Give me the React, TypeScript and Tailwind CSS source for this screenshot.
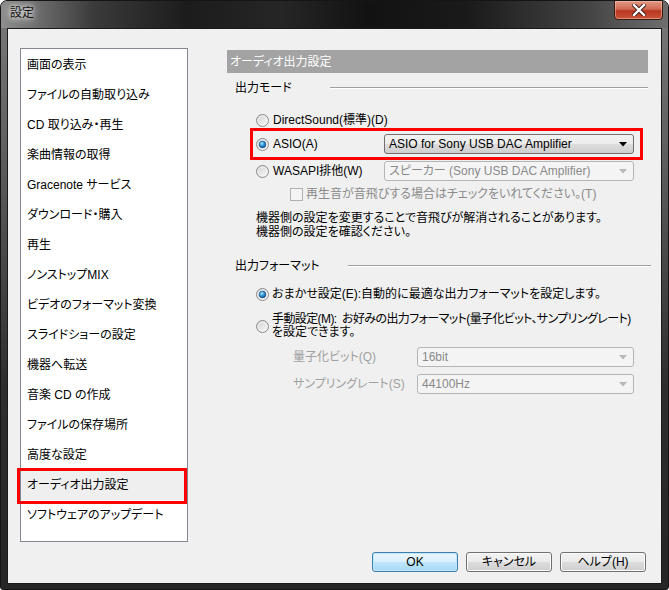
import React from "react";

const items = [
  "画面の表示",
  "ファイルの自動取り込み",
  "CD 取り込み・再生",
  "楽曲情報の取得",
  "Gracenote サービス",
  "ダウンロード・購入",
  "再生",
  "ノンストップMIX",
  "ビデオのフォーマット変換",
  "スライドショーの設定",
  "機器へ転送",
  "音楽 CD の作成",
  "ファイルの保存場所",
  "高度な設定",
  "オーディオ出力設定",
  "ソフトウェアのアップデート",
];

function Radio({ checked, id }: { checked?: boolean; id: string }) {
  return (
    <svg width="13" height="13" viewBox="0 0 13 13" className="shrink-0">
      <defs>
        <linearGradient id={`rg-${id}`} x1="0" y1="0" x2="1" y2="1">
          <stop offset="0" stopColor="#cfcfcf" />
          <stop offset="1" stopColor="#fcfcfc" />
        </linearGradient>
        <radialGradient id={`rb-${id}`} cx="0.4" cy="0.35" r="0.75">
          <stop offset="0" stopColor="#b8ecff" />
          <stop offset="0.45" stopColor="#2f93dd" />
          <stop offset="1" stopColor="#0b3f78" />
        </radialGradient>
      </defs>
      <circle cx="6.5" cy="6.5" r="6" fill={`url(#rg-${id})`} stroke="#8a8a8a" strokeWidth="1" />
      <circle cx="6.5" cy="6.5" r="4.5" fill="none" stroke="#f4f4f4" strokeWidth="0.8" />
      {checked && <circle cx="6.5" cy="6.5" r="3.4" fill={`url(#rb-${id})`} stroke="#1a4f7e" strokeWidth="0.6" />}
    </svg>
  );
}

function Combo({ text, enabled, w }: { text: string; enabled?: boolean; w: string }) {
  if (enabled) {
    return (
      <div
        className={`${w} h-[20px] flex items-center pl-[4px] pr-[6px] border border-[#707070] rounded-[3px] bg-[linear-gradient(to_bottom,#f2f2f2,#ebebeb_50%,#dddddd_50%,#cfcfcf)] text-black`}
      >
        <span className="whitespace-nowrap">{text}</span>
        <svg width="8" height="5" viewBox="0 0 8 5" className="ml-auto">
          <polygon points="0,0 8,0 4,4.5" fill="#000" />
        </svg>
      </div>
    );
  }
  return (
    <div
      className={`${w} h-[20px] flex items-center pl-[4px] pr-[6px] border border-[#b5b5b5] rounded-[3px] bg-[#f4f4f4] text-[#8a8a8a]`}
    >
      <span className="whitespace-nowrap">{text}</span>
      <svg width="8" height="5" viewBox="0 0 8 5" className="ml-auto">
        <polygon points="0,0 8,0 4,4.5" fill="#b8b8b8" />
      </svg>
    </div>
  );
}

function Btn({ label, primary }: { label: string; primary?: boolean }) {
  return (
    <div
      className={
        primary
          ? "w-[86px] h-[20px] flex items-center justify-center rounded-[3px] border border-[#3c7fb1] bg-[linear-gradient(to_bottom,#eaf6fd,#d9f0fc_50%,#bee6fd_50%,#a7d9f5)] shadow-[inset_0_0_0_1px_#c5e6f8]"
          : "w-[86px] h-[20px] flex items-center justify-center rounded-[3px] border border-[#707070] bg-[linear-gradient(to_bottom,#f2f2f2,#ebebeb_50%,#dddddd_50%,#cfcfcf)] shadow-[inset_0_0_0_1px_#fbfbfb]"
      }
    >
      {label}
    </div>
  );
}

export default function App() {
  return (
    <div className="w-[669px] h-[590px] font-['Liberation_Sans','Noto_Sans_CJK_JP',sans-serif] text-[12px] leading-none text-black [font-feature-settings:'palt']">
      <div className="w-[669px] h-[590px] flex flex-col border border-[#151515] rounded-t-[7px] rounded-b-[3px] overflow-hidden bg-[linear-gradient(to_bottom,#7a7a7a,#5a5a5a_30%,#2e2e2e_65%,#262626)]">
        {/* title bar */}
        <div className="relative h-[27px] shrink-0 bg-[linear-gradient(to_right,#8e8e8e,#6a6a6a_6%,#3a3a3a_14%,#1c1c1c_28%,#262626_42%,#121212_55%,#1a1a1a_70%,#444444_88%,#6e6e6e)]">
          <div className="absolute left-[7px] top-[6px] px-[2px] text-[12px] text-[#111] [text-shadow:0_0_5px_#ffffff,0_0_8px_#ffffff]">
            設定
          </div>
          <div className="absolute right-[5px] top-[-1px] w-[49px] h-[20px] rounded-b-[4px] border border-[#3a1a14] bg-[linear-gradient(to_bottom,#e29a86,#d06a52_45%,#b8361f_55%,#c8553a)] flex items-center justify-center shadow-[inset_0_0_0_1px_rgba(255,200,180,0.5)]">
            <svg width="14" height="12" viewBox="0 0 14 12">
              <path d="M2 1 L12 11 M12 1 L2 11" stroke="#3a1a14" strokeWidth="4.2" strokeLinecap="square" />
              <path d="M2 1 L12 11 M12 1 L2 11" stroke="#ffffff" strokeWidth="2.4" strokeLinecap="square" />
            </svg>
          </div>
        </div>
        {/* client */}
        <div className="flex-1 px-[6px] pb-[5px] flex">
          <div className="flex-1 border border-[#1b1b1b] bg-[#f0f0f0] flex flex-col pl-[12px] pt-[19px]">
            <div className="flex">
              {/* list */}
              <div className="w-[168px] h-[494px] border border-[#828790] bg-white pt-[1px]">
                {items.map((t, i) => (
                  <div
                    key={t}
                    className={`relative h-[30px] flex items-center pl-[6px] ${i === 14 ? "bg-[#efefef]" : ""}`}
                  >
                    {t}
                    {i === 14 && (
                      <div className="absolute left-[-4px] top-[-2px] w-[170px] h-[36px] border-[3px] border-[#ff0000]" />
                    )}
                  </div>
                ))}
              </div>
              {/* right panel */}
              <div className="ml-[39px] w-[421px] flex flex-col">
                <div className="mt-[2px] h-[23px] bg-[#a3a3a3] text-white flex items-center pl-[3px]">
                  オーディオ出力設定
                </div>
                <div className="mt-[6px] h-[18px] flex items-center pl-[8px]">
                  <span className="w-[95px]">出力モード</span>
                  <div className="flex-1 h-[2px] border-t border-[#a0a0a0] border-b border-b-white" />
                </div>
                <div className="mt-[14px] h-[18px] flex items-center pl-[29px]">
                  <Radio id="ds" />
                  <span className="ml-[4px]">DirectSound(標準)(D)</span>
                </div>
                <div className="relative mt-[5px] h-[20px] flex items-center pl-[29px]">
                  <div className="w-[128px] flex items-center">
                    <Radio id="asio" checked />
                    <span className="ml-[4px]">ASIO(A)</span>
                  </div>
                  <Combo enabled w="w-[250px]" text="ASIO for Sony USB DAC Amplifier" />
                  <div className="absolute left-[23px] top-[-6px] w-[393px] h-[32px] border-[3px] border-[#ff0000]" />
                </div>
                <div className="mt-[7px] h-[20px] flex items-center pl-[29px]">
                  <div className="w-[128px] flex items-center">
                    <Radio id="wasapi" />
                    <span className="ml-[4px]">WASAPI排他(W)</span>
                  </div>
                  <Combo w="w-[250px]" text="スピーカー (Sony USB DAC Amplifier)" />
                </div>
                <div className="mt-[5px] h-[16px] flex items-center pl-[63px] text-[#8a8a8a]">
                  <div className="w-[13px] h-[13px] border border-[#b1b1b1] bg-[#f4f4f4]" />
                  <span className="ml-[3px] whitespace-nowrap">再生音が音飛びする場合はチェックをいれてください。(T)</span>
                </div>
                <div className="mt-[9px] pl-[29px] leading-[14px] whitespace-nowrap">
                  <div>機器側の設定を変更することで音飛びが解消されることがあります。</div>
                  <div>機器側の設定を確認ください。</div>
                </div>
                <div className="mt-[18px] h-[18px] flex items-center pl-[8px]">
                  <span className="w-[113px]">出力フォーマット</span>
                  <div className="flex-1 h-[2px] border-t border-[#a0a0a0] border-b border-b-white mr-[-3px]" />
                </div>
                <div className="mt-[10px] h-[18px] flex items-center pl-[29px]">
                  <Radio id="auto" checked />
                  <span className="ml-[3px] whitespace-nowrap">おまかせ設定(E):自動的に最適な出力フォーマットを設定します。</span>
                </div>
                <div className="mt-[10px] flex items-center pl-[29px]">
                  <Radio id="manual" />
                  <div className="ml-[3px] leading-[13px] whitespace-nowrap">
                    <div className="tracking-[-0.6px]">手動設定(M):&nbsp; お好みの出力フォーマット(量子化ビット、サンプリングレート)</div>
                    <div>を設定できます。</div>
                  </div>
                </div>
                <div className="mt-[8px] h-[20px] flex items-center pl-[66px]">
                  <span className="w-[124px] text-[#a0a0a0] whitespace-nowrap">量子化ビット(Q)</span>
                  <Combo w="w-[217px]" text="16bit" />
                </div>
                <div className="mt-[7px] h-[20px] flex items-center pl-[66px]">
                  <span className="w-[124px] text-[#a0a0a0] whitespace-nowrap">サンプリングレート(S)</span>
                  <Combo w="w-[217px]" text="44100Hz" />
                </div>
              </div>
            </div>
            <div className="mt-[10px] flex justify-end pr-[15px] gap-[8px]">
              <Btn label="OK" primary />
              <Btn label="キャンセル" />
              <Btn label="ヘルプ(H)" />
            </div>
          </div>
        </div>
      </div>
    </div>
  );
}
